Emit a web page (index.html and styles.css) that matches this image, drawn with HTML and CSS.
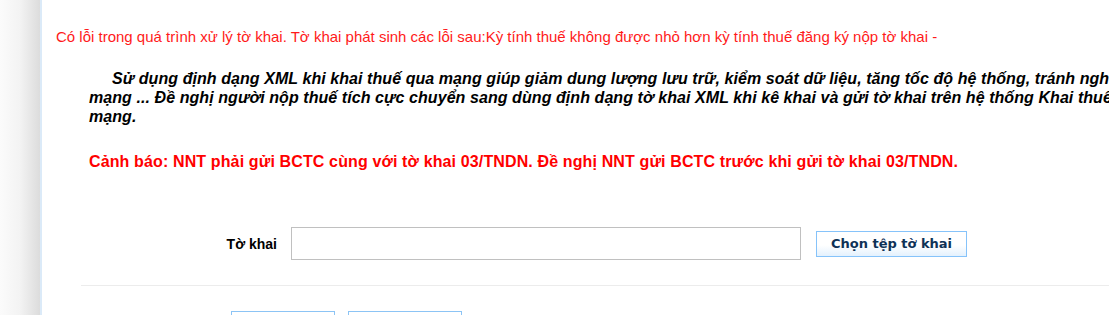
FILE: index.html
```html
<!DOCTYPE html>
<html lang="vi">
<head>
<meta charset="utf-8">
<title>Tờ khai</title>
<link rel="stylesheet" href="styles.css">
</head>
<body>
<div class="page">
  <div class="side-shadow"></div>
  <div class="main">
    <p class="error">Có lỗi trong quá trình xử lý tờ khai. Tờ khai phát sinh các lỗi sau:Kỳ tính thuế không được nhỏ hơn kỳ tính thuế đăng ký nộp tờ khai -</p>
    <div class="notice">
      <p class="xml-note">Sử dụng định dạng XML khi khai thuế qua mạng giúp giảm dung lượng lưu trữ, kiểm soát dữ liệu, tăng tốc độ hệ thống, tránh nghẽn<br>mạng ... Đề nghị người nộp thuế tích cực chuyển sang dùng định dạng tờ khai XML khi kê khai và gửi tờ khai trên hệ thống Khai thuế qua<br>mạng.</p>
      <p class="warning">Cảnh báo: NNT phải gửi BCTC cùng với tờ khai 03/TNDN. Đề nghị NNT gửi BCTC trước khi gửi tờ khai 03/TNDN.</p>
    </div>
    <div class="form-row">
      <label class="form-label">Tờ khai</label>
      <div class="file-input"></div>
      <button class="btn-choose" type="button">Chọn tệp tờ khai</button>
    </div>
    <div class="divider"></div>
    <div class="actions">
      <button class="btn-action one" type="button"></button>
      <button class="btn-action two" type="button"></button>
    </div>
  </div>
</div>
</body>
</html>
```

FILE: styles.css
```css
html, body {
  margin: 0;
  padding: 0;
  overflow: hidden;
  background: #ffffff;
}
body {
  font-family: "Liberation Sans", Arial, sans-serif;
  width: 1109px;
  height: 315px;
}
.page {
  display: flex;
  height: 315px;
  width: 1400px;
  overflow: hidden;
}
.side-shadow {
  width: 40px;
  flex: none;
  background: linear-gradient(to right, #fbfbfb 0%, #f3f3f3 50%, #dcdcdc 100%);
}
.main {
  flex: 1;
  border-left: 2px solid #dbeaf8;
  background: #ffffff;
  padding-left: 14px;
}
.error {
  margin: 28px 0 0 0;
  font-size: 15px;
  line-height: 17px;
  color: #ff1a1a;
  white-space: nowrap;
}
.notice {
  padding-left: 33px;
  margin-top: 24px;
}
.xml-note {
  margin: 0;
  font-size: 16px;
  line-height: 19px;
  font-weight: bold;
  font-style: italic;
  color: #000000;
  text-indent: 23px;
  white-space: nowrap;
  letter-spacing: 0.07px;
}
.warning {
  margin: 26px 0 0 0;
  font-size: 16px;
  line-height: 19px;
  font-weight: bold;
  color: #ff0000;
  white-space: nowrap;
  letter-spacing: 0.13px;
}
.form-row {
  display: flex;
  align-items: center;
  margin-top: 56px;
  padding-left: 165px;
  height: 33px;
}
.form-label {
  flex: none;
  width: 56px;
  text-align: right;
  white-space: nowrap;
  font-size: 14px;
  font-weight: bold;
  color: #000000;
}
.file-input {
  flex: none;
  margin-left: 14px;
  width: 508px;
  height: 31px;
  border: 1px solid #c0c0c0;
  background: #ffffff;
}
.btn-choose {
  flex: none;
  margin-left: 15px;
  width: 151px;
  height: 26px;
  border: 1px solid #86c3fa;
  background: linear-gradient(to bottom, #ffffff 0%, #ffffff 55%, #e4f1fd 100%);
  font-family: "DejaVu Sans", Tahoma, sans-serif;
  font-weight: bold;
  font-size: 13px;
  color: #0f3257;
  padding: 0;
}
.divider {
  margin-top: 25px;
  margin-left: 25px;
  height: 1px;
  background: #ececec;
}
.actions {
  display: flex;
  margin-top: 25px;
  padding-left: 175px;
  gap: 13px;
}
.btn-action {
  flex: none;
  height: 26px;
  border: 1px solid #8cc4f5;
  background: #ffffff;
  padding: 0;
}
.btn-action.one { width: 104px; }
.btn-action.two { width: 114px; }
```
